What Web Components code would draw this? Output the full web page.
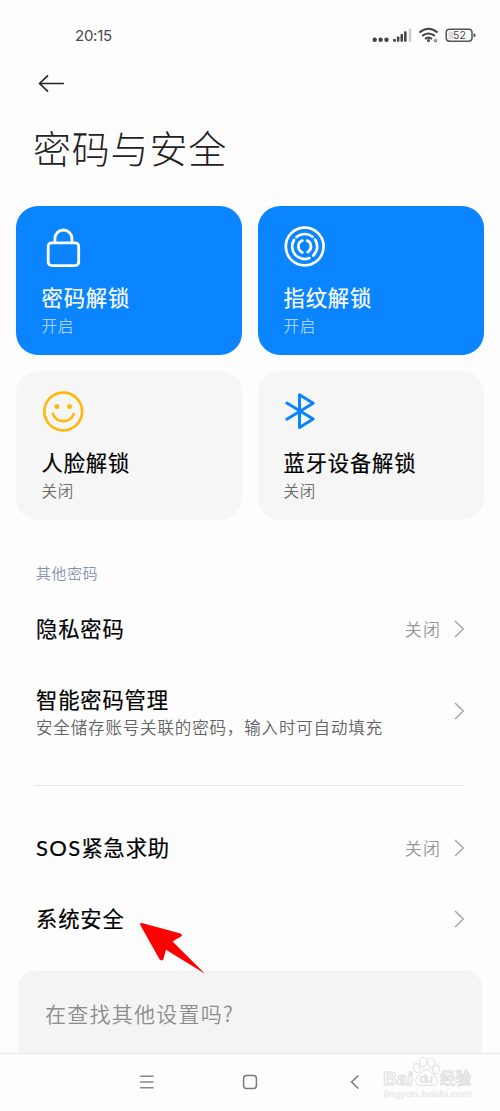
<!DOCTYPE html>
<html lang="zh-CN">
<head>
<meta charset="utf-8">
<title>密码与安全</title>
<style>
html,body{margin:0;padding:0}
body{width:500px;height:1111px;overflow:hidden;background:#fdfdfd;font-family:"Noto Sans CJK SC","Noto Sans",sans-serif;color:#000}
</style>
</head>
<body>
<settings-screen></settings-screen>
<script>
function define(name, html){
  const t=document.createElement('template');
  t.innerHTML=html;
  customElements.define(name,class extends HTMLElement{
    constructor(){super();this.attachShadow({mode:'open'}).appendChild(t.content.cloneNode(true));}
  });
}

define('status-bar',`
<style>
:host{display:flex;align-items:center;justify-content:space-between;height:70px;padding:0 24px 0 75px;box-sizing:border-box;color:#4a4a4a}
.time{font:400 15px/20px Inter,sans-serif;letter-spacing:-.25px;margin-top:2px}
svg{display:block}
</style>
<span class="time">20:15</span>
<svg width="106" height="20" viewBox="370 25 106 20">
<g fill="#444"><circle cx="374.7" cy="39.8" r="2.2"/><circle cx="380.6" cy="39.8" r="2.2"/><circle cx="386.5" cy="39.8" r="2.2"/>
<rect x="393" y="39" width="2.9" height="2.8" rx=".8"/><rect x="396.9" y="36.5" width="2.5" height="5.3" rx=".8"/><rect x="400.5" y="34" width="2.5" height="7.8" rx=".8"/><rect x="404.1" y="31.3" width="2.5" height="10.5" rx=".8"/></g>
<rect x="408.8" y="28.5" width="2.6" height="13.3" rx=".8" fill="#ccc"/>
<g fill="none" stroke="#444" stroke-width="2"><path d="M419.4 32.6Q428.5 25 437.6 32.6"/><path d="M422.2 35.9Q428.5 31 434.8 35.9"/><path d="M425 39Q428.5 36.3 432 39"/></g>
<circle cx="428.5" cy="40.4" r="1.5" fill="#444"/>
<path d="M434 41h3q0-2-1.500-2t-1.500 2q.4 1.300 3 .7" fill="none" stroke="#666" stroke-width=".8"/>
<rect x="446.200" y="29.200" width="25.800" height="12" rx="3.200" fill="#fdfdfd" stroke="#555" stroke-width="1.500"/>
<rect x="448.500" y="31.500" width="5" height="7.500" fill="#ddd"/>
<path d="M473.500 33.200q2 0 2 2t-2 2z" fill="#555"/>
<text x="459.400" y="39.200" font-family="Inter" font-size="10.500" font-weight="400" text-anchor="middle" fill="#444">52</text>
</svg>`);

define('page-header',`
<style>
:host{display:block;height:136px;padding-left:33px}
svg{display:block;margin-left:4px}
h1{margin:17.500px 0 0;font-size:38px;line-height:64px;font-weight:300;letter-spacing:.8px;color:#222;white-space:nowrap}
</style>
<svg width="28" height="28" viewBox="37 70 28 28" fill="none" stroke="#222" stroke-width="1.700" stroke-linecap="round" stroke-linejoin="round"><path d="M63.200 83.500H39.500M47.500 75.800L39.500 83.500L47.500 91.200"/></svg>
<h1><slot></slot></h1>`);

define('unlock-card',`
<style>
:host{display:flex;flex-direction:column;box-sizing:border-box;height:149px;border-radius:22px;padding:19px 25.500px 0;background:#f6f6f6;--sub:#6b6b6b}
:host([on]){background:#0b84ff;color:#fff;--sub:#a7d2ff}
.icon{height:44px}
.t{margin-top:12px;font-size:21.300px;line-height:32px;letter-spacing:.85px;font-weight:400;-webkit-text-stroke:.2px currentColor;white-space:nowrap}
.s{margin-top:1px;font-size:15.500px;line-height:22px;letter-spacing:.7px;font-weight:350;color:var(--sub)}
</style>
<div class="icon"><slot name="icon"></slot></div>
<div class="t"><slot></slot></div>
<div class="s"><slot name="state"></slot></div>`);

define('settings-row',`
<style>
:host{display:flex;align-items:center;box-sizing:border-box;height:71px;padding:0 35px 0 36px}
:host([tall]){height:94px}
.main{flex:1;white-space:nowrap;margin-top:-2px}
.t{font-size:21.300px;line-height:32px;letter-spacing:.85px;font-weight:400;-webkit-text-stroke:.2px currentColor}
.d{font-size:16.500px;line-height:22px;letter-spacing:.85px;font-weight:350;color:#636363}
:host([tall]) .d{padding-top:1px}
.v{font-size:17px;letter-spacing:1.100px;font-weight:350;color:#969696;margin:-1px 12px 0 0}
svg{display:block}
</style>
<div class="main"><div class="t"><slot></slot></div><div class="d"><slot name="desc"></slot></div></div>
<div class="v"><slot name="value"></slot></div>
<svg width="12" height="20" viewBox="0 0 12 20" fill="none" stroke="#a4a4a4" stroke-width="1.400"><path d="M2 2L10.300 10L2 18"/></svg>`);

define('search-hint',`
<style>
:host{display:block;margin:17px 18px 0;height:82px;box-sizing:border-box;padding:26px 27px 0;border-radius:16px 16px 0 0;background:#f4f4f4;color:#8c8c8c;font-size:21px;line-height:32px;letter-spacing:1.250px;font-weight:350}
</style><slot></slot>`);

define('nav-bar',`
<style>
:host{display:grid;grid-template-columns:145px 1fr 145px;align-items:center;height:58px;box-sizing:border-box;padding-bottom:2px;border-top:1px solid #e9e9e9;background:#fdfdfd}
svg{display:block}
.m{justify-self:end;margin-right:-10px}.h{justify-self:center}.b{margin-left:-10px}
</style>
<svg class="m" width="18" height="18" viewBox="0 0 18 18" stroke="#858585" stroke-width="1.500"><path d="M3.200 3.200H16.500M3.200 9H16.500M3.200 14.800H16.500"/></svg>
<svg class="h" width="18" height="18" viewBox="0 0 18 18" fill="none" stroke="#7a7a7a" stroke-width="1.500"><rect x="2.600" y="2.500" width="12.800" height="13" rx="3"/></svg>
<svg class="b" width="18" height="18" viewBox="0 0 18 18" fill="none" stroke="#7a7a7a" stroke-width="1.500"><path d="M13.300 2.500L6.600 9L13.300 15.500"/></svg>`);

define('pointer-arrow',`
<style>:host{position:absolute;left:138px;top:920px;width:70px;height:56px}svg{display:block}</style>
<svg width="70" height="56" viewBox="138 920 70 56"><path d="M141 922.700L180.500 933.400Q183 935 181 936.600L172.500 941.600L205 973.700L166 949.800L163.300 959.500Q161.500 961.500 159.500 959.300L140.300 925Q139.800 923 141 922.700Z" fill="#f00"/></svg>`);

define('site-watermark',`
<style>:host{position:absolute;left:380px;top:1054px;width:96px;height:48px}svg{display:block}</style>
<svg width="96" height="48" viewBox="380 1054 96 48" fill="#fdfdfd" stroke="#dedede" stroke-width="1" font-family="Liberation Sans,sans-serif">
<text x="383" y="1084.500" font-size="19" font-weight="700" textLength="30" lengthAdjust="spacingAndGlyphs">Bai</text>
<ellipse cx="416.700" cy="1068" rx="3.200" ry="4.600" transform="rotate(-12 416.700 1068)"/><ellipse cx="423" cy="1062" rx="3.600" ry="4.800"/><ellipse cx="431.200" cy="1062.600" rx="3.600" ry="4.800"/><ellipse cx="436" cy="1069.500" rx="3.200" ry="4.500" transform="rotate(15 436 1069.500)"/>
<path d="M426.500 1069.500c-4 0-5 3.500-7.500 5.500c-6 5-3 11 2 10.500q5.500-.7 11 0c5.500.5 8-6 2-10.500c-3-2-3.500-5.500-7.500-5.500Z"/>
<text x="419.500" y="1083" font-size="12.500" font-weight="700" textLength="13.500" fill="#e2e2e2" stroke="none">du</text>
<text x="440" y="1083.500" font-size="15.500" font-weight="500" font-family="Noto Sans CJK SC" stroke-width=".9">经验</text>
<text x="383.500" y="1096.800" font-size="9.500" fill="#e6e6e6" stroke="#ececec" stroke-width=".4" textLength="88" lengthAdjust="spacingAndGlyphs">jingyan.baidu.com</text>
</svg>`);

define('settings-screen',`
<style>
:host{display:flex;flex-direction:column;position:relative;width:500px;height:1111px;background:#fdfdfd}
.cards{display:grid;grid-template-columns:1fr 1fr;gap:16px;padding:0 16px}
.label{margin:41px 36px 0;height:33px;line-height:24px;font-size:14.800px;letter-spacing:.8px;font-weight:350;color:#8990ac}
.rule{height:1px;background:#e4e4e4;margin:27px 35px 26px}
.latin{font-family:Lato,sans-serif;font-size:22px;letter-spacing:1.300px;line-height:1}
svg{display:block}
</style>
<status-bar></status-bar>
<page-header>密码与安全</page-header>
<div class="cards">
<unlock-card on><svg slot="icon" width="44" height="44" viewBox="42 225 44 44" fill="none" stroke="#fff" stroke-width="2.800"><rect x="48.200" y="242.800" width="30.500" height="22.800" rx="3.500"/><path d="M54.900 242.500V238.500a8.500 8.500 0 0 1 17 0V242.500"/></svg>密码解锁<span slot="state">开启</span></unlock-card>
<unlock-card on><svg slot="icon" width="44" height="44" viewBox="284 225 44 44" fill="none" stroke="#fff" stroke-width="2.700" stroke-linecap="round"><circle cx="304.700" cy="246.500" r="18.900"/><path d="M296.500 237.100A12.500 12.500 0 0 1 312.500 236.700M315.100 239.600A12.500 12.500 0 0 1 313.300 255.600M309.400 258.100A12.500 12.500 0 0 1 294 240M302.300 240.600A6.400 6.400 0 0 0 302.300 252.400M307.100 240.600A6.400 6.400 0 0 1 307.800 252"/></svg>指纹解锁<span slot="state">开启</span></unlock-card>
<unlock-card><svg slot="icon" width="44" height="44" viewBox="42 390 44 44" fill="none" stroke="#ffb80d" stroke-width="2.700" stroke-linecap="round"><circle cx="63.200" cy="411.500" r="18.900"/><path d="M53 413.800a10.700 10.100 0 0 0 20.600 0"/><g fill="#ffb80d" stroke="none"><circle cx="57" cy="406.600" r="2.500"/><circle cx="69.500" cy="406.600" r="2.500"/></g></svg>人脸解锁<span slot="state">关闭</span></unlock-card>
<unlock-card><svg slot="icon" width="44" height="44" viewBox="284 390 44 44" fill="none" stroke="#0b84ff" stroke-width="3" stroke-linecap="round" stroke-linejoin="round"><path d="M286.800 403L313.200 419L299.500 427.500V394.700L313.200 403.300L286.800 419.200"/></svg>蓝牙设备解锁<span slot="state">关闭</span></unlock-card>
</div>
<div class="label">其他密码</div>
<settings-row>隐私密码<span slot="value">关闭</span></settings-row>
<settings-row tall>智能密码管理<span slot="desc">安全储存账号关联的密码，输入时可自动填充</span></settings-row>
<div class="rule"></div>
<settings-row><span class="latin">SOS</span>紧急求助<span slot="value">关闭</span></settings-row>
<settings-row>系统安全</settings-row>
<search-hint>在查找其他设置吗?</search-hint>
<nav-bar></nav-bar>
<pointer-arrow></pointer-arrow>
<site-watermark></site-watermark>`);
</script>
</body>
</html>
